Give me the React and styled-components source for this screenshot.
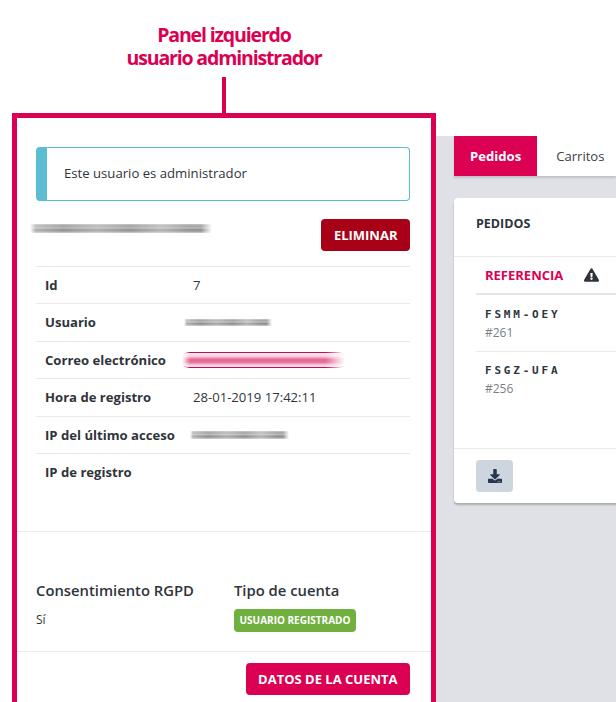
import styled, { createGlobalStyle } from "styled-components";
import { FaDownload, FaExclamationTriangle } from "react-icons/fa";

const crimson = "#dc0052";

const Global = createGlobalStyle`
  html, body {
    margin: 0;
    padding: 0;
    background: #fff;
  }
  body {
    font-family: "Open Sans", "Liberation Sans", sans-serif;
    color: #2f343b;
  }
`;

const S = {};
S.Page = styled.div`
  width: 616px;
  height: 702px;
  overflow: hidden;
  background: #fff;
`;
S.Annotation = styled.div`
  width: 424px;
  margin-left: 12px;
  height: 113px;
  display: flex;
  flex-direction: column;
  align-items: center;
  padding-top: 23px;
  box-sizing: border-box;
`;
S.AnnotationTitle = styled.div`
  font-size: 19.5px;
  line-height: 23px;
  font-weight: 700;
  letter-spacing: -1.15px;
  color: ${crimson};
  text-align: center;
`;
S.Connector = styled.div`
  width: 4px;
  flex: 1;
  margin-top: 8px;
  background: ${crimson};
`;
S.Columns = styled.div`
  display: flex;
  align-items: stretch;
  height: 589px;
`;
S.Panel = styled.div`
  width: 424px;
  height: 620px;
  flex: none;
  margin-left: 12px;
  box-sizing: border-box;
  border: 5px solid ${crimson};
  background: #fff;
`;
S.PanelTop = styled.div`
  padding: 29px 21px 0 19px;
`;
S.Alert = styled.div`
  height: 54px;
  box-sizing: border-box;
  display: flex;
  align-items: center;
  border: 1px solid #5bbcd2;
  border-left: 11px solid #5bbcd2;
  border-radius: 4px;
  padding: 0 0 2px 17px;
  font-size: 13.15px;
  color: #2f343b;
`;
S.NameRow = styled.div`
  display: flex;
  justify-content: space-between;
  align-items: flex-start;
  margin-top: 18px;
  height: 46.6px;
`;
S.Smudge = styled.div`
  flex: none;
  width: ${(p) => p.$w}px;
  height: ${(p) => p.$h}px;
  margin-left: ${(p) => p.$x}px;
  margin-top: ${(p) => p.$top || 0}px;
  filter: blur(0.4px);
  background:
    linear-gradient(
      90deg,
      rgba(255, 255, 255, 0.35),
      rgba(255, 255, 255, 0) 18%,
      rgba(255, 255, 255, 0.25) 37%,
      rgba(255, 255, 255, 0) 55%,
      rgba(255, 255, 255, 0.3) 72%,
      rgba(255, 255, 255, 0) 88%
    ),
    linear-gradient(#c4c4c4, #a2a2a2 25%, #bdbdbd 45%, #8a8a8a 65%, #a8a8a8 85%, #cfcfcf);
  mask-image: linear-gradient(90deg, transparent, #000 3%, #000 94%, transparent);
`;
S.Button = styled.button`
  height: 32px;
  box-sizing: border-box;
  border: 0;
  border-radius: 4px;
  padding: 0 12.5px;
  background: ${(p) => p.$bg};
  color: #fff;
  font-family: inherit;
  font-size: 13px;
  font-weight: 700;
  white-space: nowrap;
`;
S.Rows = styled.div`
  border-top: 1px solid #e9e9ec;
`;
S.Row = styled.div`
  display: grid;
  grid-template-columns: 148px 1fr;
  align-items: center;
  height: 37.5px;
  box-sizing: border-box;
  padding: 0 0 0 9px;
  border-bottom: 1px solid ${(p) => (p.$last ? "transparent" : "#e9e9ec")};
  font-size: 13.1px;
`;
S.Label = styled.span`
  font-weight: 700;
  white-space: nowrap;
`;
S.Value = styled.span`
  white-space: nowrap;
`;
S.EmailSmudge = styled.div`
  width: 163px;
  height: 16px;
  margin-left: -11px;
  box-sizing: border-box;
  border-top: 1px solid ${crimson};
  border-bottom: 1px solid ${crimson};
  border-radius: 6px;
  background: linear-gradient(#fff2f6, #f8c9da 25%, #e56a97 45%, #e56a97 65%, #f8c9da 85%, #fff2f6);
  mask-image: linear-gradient(90deg, transparent, #000 5%, #000 88%, transparent);
`;
S.Divider = styled.div`
  height: 1px;
  background: #e9e9ec;
  margin-top: ${(p) => p.$top}px;
`;
S.Details = styled.div`
  display: grid;
  grid-template-columns: 198px 1fr;
  height: 119px;
  box-sizing: border-box;
  padding: 48px 21px 0 19px;
`;
S.DetailTitle = styled.div`
  font-size: 14.8px;
  line-height: 20px;
  font-weight: 600;
  white-space: nowrap;
`;
S.DetailText = styled.div`
  font-size: 12px;
  line-height: 18px;
  margin-top: 11px;
`;
S.Badge = styled.span`
  display: inline-block;
  height: 23px;
  margin-top: 9px;
  box-sizing: border-box;
  padding: 0 5.5px;
  border-radius: 4px;
  background: #6fb03f;
  color: #fff;
  font-size: 10px;
  font-weight: 700;
  line-height: 23px;
  white-space: nowrap;
`;
S.PanelFooter = styled.div`
  display: flex;
  justify-content: flex-end;
  padding: 11px 21px 0 0;
`;
S.Workspace = styled.div`
  flex: 1;
  min-width: 0;
  margin-top: 23px;
  background: #dfe1e6;
  overflow: hidden;
  padding-left: 18px;
`;
S.Tabs = styled.div`
  display: flex;
  height: 40px;
  background: #fff;
  box-shadow: 0 2px 2px rgba(0, 0, 0, 0.14);
`;
S.Tab = styled.div`
  display: flex;
  align-items: center;
  padding: 0 ${(p) => (p.$active ? "16px" : "19px")};
  background: ${(p) => (p.$active ? crimson : "#fff")};
  color: ${(p) => (p.$active ? "#fff" : "#3c4148")};
  font-size: 13.1px;
  font-weight: ${(p) => (p.$active ? 700 : 400)};
`;
S.Card = styled.div`
  width: 300px;
  height: 305px;
  margin-top: 22px;
  background: #fff;
  border-radius: 4px;
  box-shadow: 0 2px 2px rgba(0, 0, 0, 0.24);
  display: flex;
  flex-direction: column;
`;
S.CardTitle = styled.div`
  height: 59px;
  box-sizing: border-box;
  padding: 17px 0 0 22px;
  border-bottom: 1px solid #e9e9ec;
  font-size: 12.5px;
  font-weight: 700;
  line-height: 18px;
`;
S.CardBody = styled.div`
  flex: 1;
  padding-left: 22px;
`;
S.TableHead = styled.div`
  display: flex;
  align-items: center;
  gap: 21px;
  height: 38px;
  box-sizing: border-box;
  padding: 0 0 0 9px;
  border-bottom: 2px solid #e3e4e8;
  color: ${crimson};
  font-size: 13px;
  font-weight: 700;
  svg {
    width: 15px;
    height: 14px;
    color: #2f343b;
  }
`;
S.Order = styled.div`
  height: ${(p) => (p.$last ? "56px" : "57px")};
  box-sizing: border-box;
  padding: ${(p) => (p.$last ? "11px" : "12px")} 0 0 9px;
  border-bottom: ${(p) => (p.$last ? "0" : "1px solid #e9e9ec")};
`;
S.OrderRef = styled.div`
  font-family: "DejaVu Sans Mono", "Liberation Mono", monospace;
  font-size: 11px;
  font-weight: 700;
  line-height: 15px;
  letter-spacing: 2.8px;
  color: #2f343b;
`;
S.OrderId = styled.div`
  margin-top: 2px;
  font-size: 12px;
  line-height: 18px;
  color: #7b7f85;
`;
S.CardFooter = styled.div`
  height: 55px;
  box-sizing: border-box;
  padding: 11px 0 0 22px;
  border-top: 1px solid #e9e9ec;
`;
S.IconButton = styled.button`
  display: flex;
  align-items: center;
  justify-content: center;
  width: 37px;
  height: 32px;
  border: 0;
  border-radius: 4px;
  background: #cdd6df;
  color: #25374f;
  padding: 0;
  svg {
    width: 14px;
    height: 14px;
  }
`;

const rows = [
  { label: "Id", value: "7" },
  { label: "Usuario", smudge: { w: 88, h: 7, x: -9 } },
  { label: "Correo electrónico", email: true },
  { label: "Hora de registro", value: "28-01-2019 17:42:11" },
  { label: "IP del último acceso", smudge: { w: 99, h: 8, x: -3 } },
  { label: "IP de registro", last: true },
];

const orders = [
  { ref: "FSMM-OEY", id: "#261" },
  { ref: "FSGZ-UFA", id: "#256", last: true },
];

export default function App() {
  return (
    <S.Page>
      <Global />
      <S.Annotation>
        <S.AnnotationTitle>
          Panel izquierdo
          <br />
          usuario administrador
        </S.AnnotationTitle>
        <S.Connector />
      </S.Annotation>
      <S.Columns>
        <S.Panel>
          <S.PanelTop>
            <S.Alert>Este usuario es administrador</S.Alert>
            <S.NameRow>
              <S.Smudge $w={182} $h={9} $x={-6} $top={5} />
              <S.Button $bg="#a80016">ELIMINAR</S.Button>
            </S.NameRow>
            <S.Rows>
              {rows.map((row) => (
                <S.Row key={row.label} $last={row.last}>
                  <S.Label>{row.label}</S.Label>
                  {row.value && <S.Value>{row.value}</S.Value>}
                  {row.smudge && (
                    <S.Smudge $w={row.smudge.w} $h={row.smudge.h} $x={row.smudge.x} />
                  )}
                  {row.email && <S.EmailSmudge />}
                </S.Row>
              ))}
            </S.Rows>
          </S.PanelTop>
          <S.Divider $top={39.4} />
          <S.Details>
            <div>
              <S.DetailTitle>Consentimiento RGPD</S.DetailTitle>
              <S.DetailText>Sí</S.DetailText>
            </div>
            <div>
              <S.DetailTitle>Tipo de cuenta</S.DetailTitle>
              <S.Badge>USUARIO REGISTRADO</S.Badge>
            </div>
          </S.Details>
          <S.Divider $top={0} />
          <S.PanelFooter>
            <S.Button $bg={crimson}>DATOS DE LA CUENTA</S.Button>
          </S.PanelFooter>
        </S.Panel>
        <S.Workspace>
          <S.Tabs>
            <S.Tab $active>Pedidos</S.Tab>
            <S.Tab>Carritos</S.Tab>
          </S.Tabs>
          <S.Card>
            <S.CardTitle>PEDIDOS</S.CardTitle>
            <S.CardBody>
              <S.TableHead>
                REFERENCIA
                <FaExclamationTriangle />
              </S.TableHead>
              {orders.map((order) => (
                <S.Order key={order.ref} $last={order.last}>
                  <S.OrderRef>{order.ref}</S.OrderRef>
                  <S.OrderId>{order.id}</S.OrderId>
                </S.Order>
              ))}
            </S.CardBody>
            <S.CardFooter>
              <S.IconButton>
                <FaDownload />
              </S.IconButton>
            </S.CardFooter>
          </S.Card>
        </S.Workspace>
      </S.Columns>
    </S.Page>
  );
}
